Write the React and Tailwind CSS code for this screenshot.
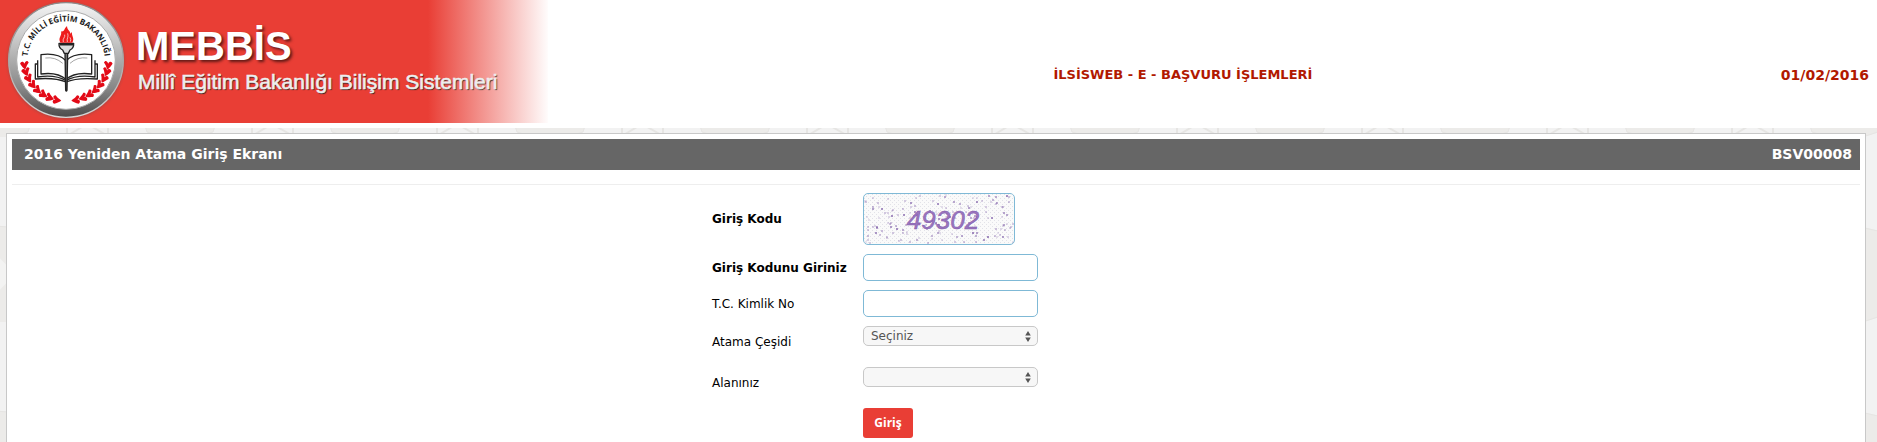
import { useState } from 'react'

const CODE = '49302'

// small seeded generator, so the speckles stay in place between renders
function makeSpecks(count) {
  let seed = 77
  const next = () => {
    seed = (seed * 16807) % 2147483647
    return seed / 2147483647
  }
  return Array.from({ length: count }, () => ({
    x: Math.round(next() * 148) + 1,
    y: Math.round(next() * 48) + 1,
    r: next() > 0.6 ? 1 : 0.7,
    o: 0.35 + next() * 0.5,
  }))
}

const SPECKS = makeSpecks(170)

const LEAVES = [
  [74, 194, 80],
  [78, 214, 68],
  [86, 234, 58],
  [98, 253, 48],
  [112, 269, 38],
  [129, 282, 28],
  [148, 292, 18],
  [169, 299, 8],
]

function Laurel() {
  return (
    <g fill="#e30a17">
      {LEAVES.map(([x, y, turn]) => (
        <g key={y} transform={`translate(${x} ${y}) rotate(${turn})`}>
          <path d="M15 1C10-4 4-4-4-13C-13-11-11-4-3 0C-12 2-12 10-5 13C3 9 9 7 15 1Z" />
        </g>
      ))}
    </g>
  )
}

function Logo() {
  return (
    <svg viewBox="0 0 420 390" className="h-[130px] w-[140px] shrink-0" aria-hidden="true">
      <defs>
        <linearGradient id="ring" x1="0" y1="0" x2="0" y2="1">
          <stop offset="0" stopColor="#f4f4f4" />
          <stop offset="0.35" stopColor="#c4c4c4" />
          <stop offset="0.75" stopColor="#868686" />
          <stop offset="1" stopColor="#4c4c4c" />
        </linearGradient>
        <linearGradient id="rim" x1="0" y1="0" x2="0" y2="1">
          <stop offset="0" stopColor="#8b8b8b" />
          <stop offset="0.5" stopColor="#a8a8a8" />
          <stop offset="1" stopColor="#d6d6d6" />
        </linearGradient>
        <radialGradient id="halo">
          <stop offset="0.9" stopColor="#8a4a46" stopOpacity="0.8" />
          <stop offset="1" stopColor="#e93e35" stopOpacity="0" />
        </radialGradient>
        <path id="arc" d="M82 180A116 116 0 0 1 314 180" />
      </defs>
      <circle cx="198" cy="182" r="186" fill="url(#halo)" />
      <circle cx="198" cy="180" r="172" fill="url(#ring)" stroke="url(#rim)" strokeWidth="4" />
      <circle cx="198" cy="180" r="148" fill="#fff" stroke="#aaa" strokeWidth="3" />
      <text fontSize="24" fontWeight="700" fill="#1b1b1b" textAnchor="middle" className="font-['Open_Sans',sans-serif]">
        <textPath href="#arc" startOffset="50%">
          T.C. MİLLİ EĞİTİM BAKANLIĞI
        </textPath>
      </text>
      <Laurel />
      <g transform="translate(398 0) scale(-1 1)">
        <Laurel />
      </g>
      <g fill="#fff" stroke="#222" strokeWidth="4" strokeLinejoin="round">
        <path d="M119 192H106V237C140 234 170 234 198 246C226 234 256 234 292 237V192H279" />
        <path d="M113 181V231C145 226 176 229 198 242C220 229 253 226 285 231V181" />
        <path d="M123 164V222C153 218 180 222 198 238V182C180 164 153 160 123 164Z" />
        <path d="M275 164V222C245 218 216 222 198 238V182C216 164 245 160 275 164Z" />
        <path
          d="M136 174Q166 170 188 190M262 174Q232 170 210 190"
          fill="none"
          strokeWidth="2"
          stroke="#777"
        />
        <path d="M195 158H203L201 271Q199 276 197 271Z" fill="#777" strokeWidth="4" />
        <path d="M177 130H221Q222 144 210 150L205 160H193L188 150Q176 144 177 130Z" fill="#ddd" />
        <path d="M179 134H219" strokeWidth="5" />
      </g>
      <path
        d="M181 128C173 112 187 108 183 94C193 97 192 86 201 78C201 90 211 92 211 101L216 96C214 109 225 114 217 128Z"
        fill="#ee1c1c"
      />
      <path d="M190 126C186 116 197 112 194 104M202 126C199 114 207 112 203 100M211 125Q214 119 210 112" fill="none" stroke="#fff" strokeWidth="2" />
    </svg>
  )
}

function Backdrop() {
  return (
    <svg className="absolute inset-0 h-full w-full" aria-hidden="true">
      <defs>
        <pattern id="tiles" width="185" height="185" x="-5" y="137" patternUnits="userSpaceOnUse">
          <rect width="185" height="185" fill="#f2f2f2" />
          <path d="M-33 94Q0 84 33 94L52 122L33 180Q0 194-33 180L-52 122Z" fill="#ecebe9" stroke="#e6e5e3" />
          <path d="M152 94Q185 84 218 94L237 122L218 180Q185 194 152 180L133 122Z" fill="#ecebe9" stroke="#e6e5e3" />
          <path d="M0 116L20 137L0 158L-20 137ZM185 116L205 137L185 158L165 137Z" fill="#f3f3f2" />
          <path d="M72 165V185M113 165V185M72 184L92 172L113 184" fill="none" stroke="#e6e5e3" strokeWidth="2" />
        </pattern>
      </defs>
      <rect width="100%" height="100%" fill="url(#tiles)" />
    </svg>
  )
}

function Header() {
  return (
    <header className="relative flex h-32 items-center bg-white font-bold text-[#b11900]">
      <div className="flex h-full w-[585px] shrink-0">
        <div className="flex h-[123px] w-[548px] bg-[linear-gradient(to_right,#e93e35_428px,#ffffff_550px)]">
          <Logo />
          <div className="-ml-1 flex flex-col pt-[22px] whitespace-nowrap font-['Liberation_Sans',Arial,sans-serif]">
            <h1 className="text-[40px] leading-[48px] font-bold text-white [text-shadow:2px_2px_3px_#00000099]">MEBBİS</h1>
            <p className="pl-0.5 text-[21px] leading-6 font-normal text-[#eeeeee] [-webkit-text-stroke:0.6px_#eeeeee] [text-shadow:1px_1px_1px_#222222]">
              Millî Eğitim Bakanlığı Bilişim Sistemleri
            </p>
          </div>
        </div>
      </div>
      <p className="flex-1 pt-[22px] text-center text-[13px]">İLSİSWEB - E - BAŞVURU İŞLEMLERİ</p>
      <p className="pt-[22px] pr-2 text-[14px]">01/02/2016</p>
    </header>
  )
}

function Captcha() {
  return (
    <svg
      viewBox="0 0 150 50"
      role="img"
      aria-label="Giriş kodu"
      className="h-[52px] w-[152px] rounded-[5px] border border-[#7fb9d6] bg-[#fafafa]"
    >
      <defs>
        <pattern id="grain" width="4" height="4" patternUnits="userSpaceOnUse">
          <rect width="1" height="1" fill="#e2e2e8" />
          <rect x="2" y="2" width="1" height="1" fill="#e2e2e8" />
        </pattern>
      </defs>
      <rect width="150" height="50" fill="url(#grain)" />
      {SPECKS.map((s, i) => (
        <circle key={i} cx={s.x} cy={s.y} r={s.r} fill="#6f4a9e" opacity={s.o} />
      ))}
      <text
        x="79"
        y="35"
        textAnchor="middle"
        fontSize="26"
        fontStyle="italic"
        fill="#9a76be"
        stroke="#8058ac"
        strokeWidth="0.5"
        className="font-['Liberation_Sans_Narrow','Liberation_Sans',sans-serif]"
      >
        {CODE}
      </text>
    </svg>
  )
}

function TextField({ id, label, bold = false, value, onChange }) {
  return (
    <>
      <label htmlFor={id} className={bold ? 'font-bold' : ''}>
        {label}
      </label>
      <input
        id={id}
        type="text"
        value={value}
        onChange={(e) => onChange(e.target.value)}
        className="h-[27px] w-[175px] rounded-[5px] border border-[#7fb9d6] bg-white px-2"
      />
    </>
  )
}

function SelectField({ id, label, options }) {
  return (
    <>
      <label htmlFor={id}>{label}</label>
      <div className="h-8">
        <div className="relative h-5 w-[175px]">
          <select
            id={id}
            className="block h-5 w-full appearance-none rounded-[5px] border border-[#c8c8c8] bg-[#f7f7f7] pr-6 pl-[7px] leading-[18px] text-[#555555]"
          >
            {options.map((o) => (
              <option key={o}>{o}</option>
            ))}
          </select>
          <svg viewBox="0 0 6 11" className="pointer-events-none absolute top-[5px] right-[7px] h-[11px] w-[6px]" fill="#555" aria-hidden="true">
            <path d="M3 0L5.8 4.6H.2ZM3 11L.2 6.4H5.8Z" />
          </svg>
        </div>
      </div>
    </>
  )
}

export default function App() {
  const [code, setCode] = useState('')
  const [idNumber, setIdNumber] = useState('')

  return (
    <div className="relative flex min-h-screen flex-col bg-[#f2f2f2] font-['DejaVu_Sans',Verdana,sans-serif] text-[12px] text-black">
      <Backdrop />
      <Header />
      <main className="relative mt-[5px] mr-[11px] ml-[6px] flex-1 border border-b-0 border-[#c8c8c8] bg-white px-[5px] pt-[5px]">
        <div className="flex h-[31px] items-center justify-between bg-[#666666] px-2 pl-3 text-[14px] font-bold text-white">
          <h2>2016 Yeniden Atama Giriş Ekranı</h2>
          <span>BSV00008</span>
        </div>
        <hr className="mt-3.5 border-[#eeeeee]" />
        <form
          onSubmit={(e) => e.preventDefault()}
          className="mx-auto mt-2 grid w-[448px] grid-cols-[151px_1fr] items-center gap-y-[9px]"
        >
          <span className="font-bold">Giriş Kodu</span>
          <Captcha />
          <TextField id="code" label="Giriş Kodunu Giriniz" bold value={code} onChange={setCode} />
          <TextField id="id-number" label="T.C. Kimlik No" value={idNumber} onChange={setIdNumber} />
          <SelectField id="kind" label="Atama Çeşidi" options={['Seçiniz']} />
          <SelectField id="field" label="Alanınız" options={['']} />
          <button type="submit" className="col-start-2 h-[30px] w-[50px] rounded-[3px] bg-[#e93e35] font-['Open_Sans',sans-serif] font-bold text-white">
            Giriş
          </button>
        </form>
      </main>
    </div>
  )
}
